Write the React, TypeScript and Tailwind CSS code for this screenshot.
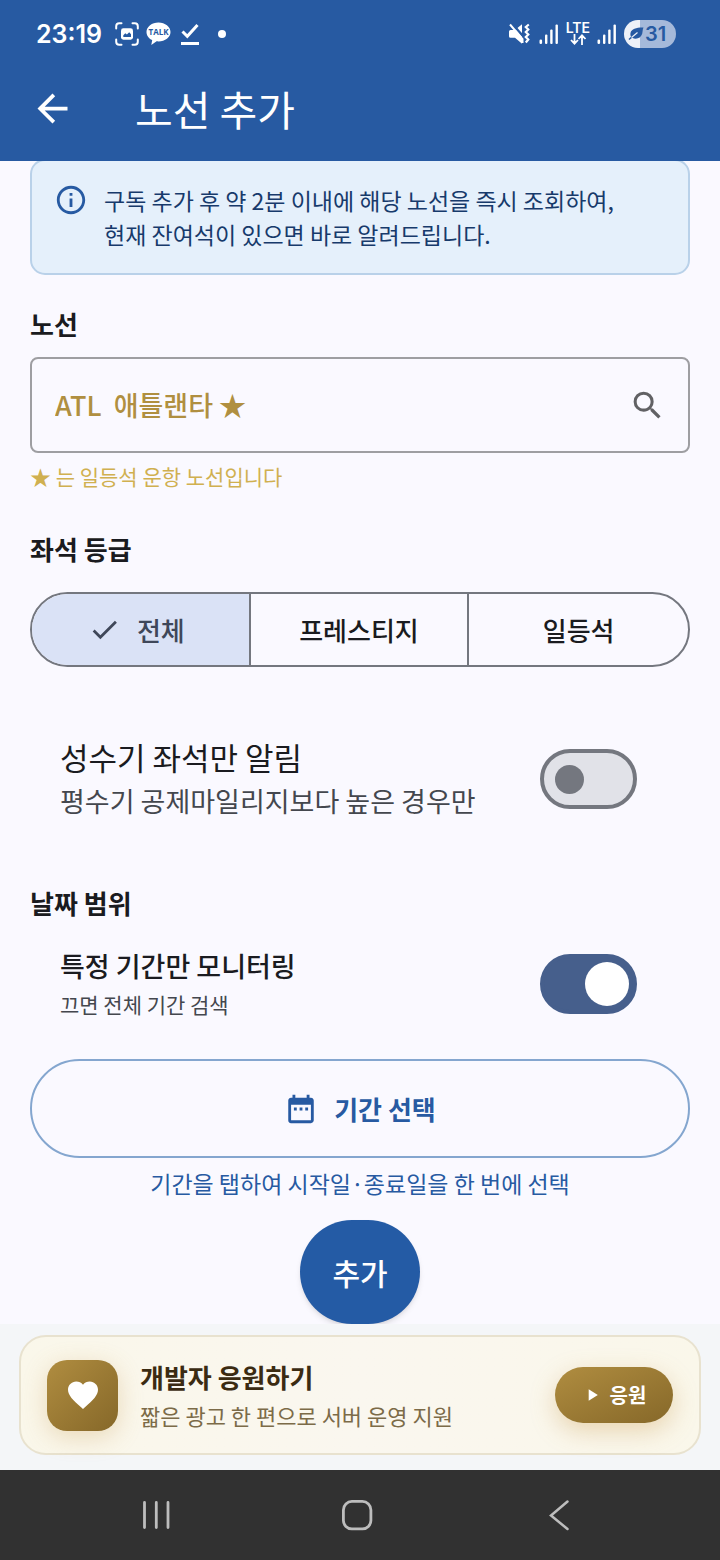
import { useState } from "react";
import {
  MdArrowBack,
  MdCheck,
  MdDateRange,
  MdFavorite,
  MdInfoOutline,
  MdPlayArrow,
  MdSearch,
} from "react-icons/md";

function SignalIcon() {
  return (
    <svg viewBox="0 0 20 20" className="h-5 w-5" fill="#fff" aria-hidden="true">
      <rect x="0.5" y="15.5" width="2.6" height="4.5" rx="1.2" />
      <rect x="6" y="10.5" width="2.4" height="9.5" rx="1" />
      <rect x="11.2" y="5.5" width="2.4" height="14.5" rx="1" />
      <rect x="16.5" y="0.5" width="2.4" height="19.5" rx="1" />
    </svg>
  );
}

function StatusBar() {
  return (
    <div className="flex h-[67px] items-center justify-between pr-11 pl-9">
      <div className="flex items-center">
        <span className="font-[Inter,sans-serif] text-[25px] leading-8 font-semibold">23:19</span>
        <svg viewBox="0 0 24 24" className="ml-[13px] h-6 w-6" fill="none" stroke="#fff" strokeWidth="2" strokeLinecap="round" aria-hidden="true">
          <path d="M1.2 6.5V4.2a3 3 0 0 1 3-3h2.3M17.5 1.2h2.3a3 3 0 0 1 3 3v2.3M22.8 17.5v2.3a3 3 0 0 1-3 3h-2.3M6.5 22.8H4.2a3 3 0 0 1-3-3v-2.3" />
          <rect x="6" y="6.3" width="12" height="11.4" rx="2.4" fill="#fff" stroke="none" />
          <path d="M8.3 15v-1.8l2-2 1.6 1.4 2.3-2.4 1.8 2V15z" fill="#275aa2" stroke="none" />
        </svg>
        <svg viewBox="0 0 26 24" className="ml-[7px] h-6 w-[26px]" aria-hidden="true">
          <path d="M12.5.5C5.9.5.5 4.7.5 10c0 3.500 2.300 6.500 5.700 8.100L5.300 23l5.300-3.700c.6.1 1.300.1 1.900.1 6.600 0 12-4.200 12-9.400S19.100.5 12.500.5z" fill="#fff" />
          <text x="12.500" y="13" textAnchor="middle" fontSize="8" fontWeight="700" fontFamily="'Open Sans', 'Liberation Sans', sans-serif" fill="#275aa2">TALK</text>
        </svg>
        <svg viewBox="0 0 20 24" className="ml-2 h-6 w-5" fill="none" stroke="#fff" strokeWidth="3" aria-hidden="true">
          <path d="M2.500 9.500l4.800 4.800L17.500 3" />
          <path d="M1 21.500h18" />
        </svg>
        <span className="ml-[18px] h-2 w-2 rounded-full bg-white" />
      </div>
      <div className="flex items-center">
        <svg viewBox="0 0 22 22" className="mr-[9px] h-[22px] w-[22px]" aria-hidden="true">
          <path d="M2.500 7h4.500L14 1.200v19.600l-7-6H2.500a1.500 1.500 0 0 1-1.500-1.500V8.500A1.500 1.500 0 0 1 2.500 7z" fill="#fff" />
          <path d="M4.500 1L17 15.500" stroke="#275aa2" strokeWidth="2.500" />
          <path d="M2 1.500L14.500 16v4" fill="none" stroke="#fff" strokeWidth="2" />
          <path d="M20.800 1.500l-3 2.500 2.500 2.500-2.500 2.500 2.500 2.500-2.500 2.500 2.500 2.500-2.500 3" fill="none" stroke="#fff" strokeWidth="2.200" />
        </svg>
        <SignalIcon />
        <div className="mx-[7px] flex flex-col items-center">
          <span className="font-[Inter,sans-serif] text-sm leading-3 font-semibold">LTE</span>
          <svg viewBox="0 0 18 11" className="h-[11px] w-[18px]" fill="none" stroke="#fff" strokeWidth="1.800" aria-hidden="true">
            <path d="M5.500 0v9.500M2 6l3.500 3.700L9 6M13 11V1.200M9.500 5L13 1.300 16.500 5" />
          </svg>
        </div>
        <SignalIcon />
        <div className="ml-[7px] flex h-7 w-[52px] items-center gap-px rounded-full bg-linear-to-r from-[#edf1f8] from-31% to-[#a5b9da] to-31% pl-1 text-[#275aa2]">
          <svg viewBox="0 0 16 14" className="h-3.5 w-4" aria-hidden="true">
            <path d="M15.500.5C9 .300 3.500 1.500 2.500 6c-.3 1.500 0 2.700.5 3.700L.5 12l.8 1 2.900-2.200c4 2 8.600.5 10-4 .5-2 .3-4.300 1.300-6.300z" fill="currentColor" />
            <path d="M3.500 10.500l6-5" stroke="#edf1f8" strokeWidth="1.200" />
          </svg>
          <span className="font-[Inter,sans-serif] text-xl leading-7 font-semibold">31</span>
        </div>
      </div>
    </div>
  );
}

function SectionTitle({ children }: { children: string }) {
  return <h2 className="text-[26px] leading-9 font-bold">{children}</h2>;
}

function Toggle({ id, checked, onChange }: { id: string; checked: boolean; onChange: (value: boolean) => void }) {
  return (
    <input
      id={id}
      type="checkbox"
      role="switch"
      checked={checked}
      onChange={(event) => onChange(event.target.checked)}
      className="flex h-[60px] w-[97px] shrink-0 appearance-none items-center rounded-full border-4 border-[#74777f] bg-[#e1e2e8] px-[11px] before:h-[29px] before:w-[29px] before:rounded-full before:bg-[#74777f] checked:justify-end checked:border-[#465f8c] checked:bg-[#465f8c] checked:px-1 checked:before:h-11 checked:before:w-11 checked:before:bg-white"
    />
  );
}

const seatClasses = ["전체", "프레스티지", "일등석"];

export default function App() {
  const [route, setRoute] = useState("ATL  애틀랜타 ★");
  const [seat, setSeat] = useState("전체");
  const [peakOnly, setPeakOnly] = useState(false);
  const [rangeOnly, setRangeOnly] = useState(true);

  return (
    <div className="flex min-h-screen flex-col bg-[#faf9ff] font-['Noto_Sans_CJK_KR',sans-serif] text-[#1a1b20]">
      <header className="bg-[#275aa2] text-white">
        <StatusBar />
        <div className="flex h-[94px] items-center pb-3 pl-[30px]">
          <button type="button" aria-label="뒤로">
            <MdArrowBack className="h-[45px] w-[45px]" />
          </button>
          <h1 className="ml-[60px] text-[41px] leading-[60px] font-normal">노선 추가</h1>
        </div>
      </header>

      <main className="flex flex-1 flex-col overflow-hidden px-[30px]">
        <div className="-mt-0.5 flex gap-4 rounded-[15px] border-2 border-[#b9d1e9] bg-[#e5f0fb] px-[22px] py-[22px]">
          <MdInfoOutline className="h-[34px] w-[34px] shrink-0 text-[#275aa2]" />
          <p className="text-[23px] leading-[34px] text-[#173a6b]">
            구독 추가 후 약 2분 이내에 해당 노선을 즉시 조회하여,
            <br />
            현재 잔여석이 있으면 바로 알려드립니다.
          </p>
        </div>

        <section className="mt-[31px]">
          <SectionTitle>노선</SectionTitle>
          <div className="mt-[15px] flex h-24 items-center rounded-lg border-2 border-[#9e9ea2] pr-[22px] pl-[23px]">
            <input
              aria-label="노선"
              value={route}
              onChange={(event) => setRoute(event.target.value)}
              className="min-w-0 flex-1 bg-transparent text-[27px] leading-10 font-medium text-[#b08f40] outline-none"
            />
            <MdSearch className="h-[37px] w-[37px] text-[#616164]" />
          </div>
          <p className="mt-[9px] text-[21px] leading-7 text-[#d0b050]">★ 는 일등석 운항 노선입니다</p>
        </section>

        <section className="mt-[41px]">
          <SectionTitle>좌석 등급</SectionTitle>
          <div className="mt-[25px] grid h-[75px] grid-cols-3 divide-x-2 divide-[#74777f] overflow-hidden rounded-full border-2 border-[#74777f]">
            {seatClasses.map((name) => (
              <label
                key={name}
                className="flex items-center justify-center text-[26px] leading-9 font-medium has-checked:bg-[#dae2f6] has-checked:pr-2 has-checked:text-[#3f4759]"
              >
                <input
                  type="radio"
                  name="seat"
                  value={name}
                  checked={seat === name}
                  onChange={() => setSeat(name)}
                  className="sr-only"
                />
                {seat === name && <MdCheck className="mr-4 h-[33px] w-[33px]" />}
                {name}
              </label>
            ))}
          </div>
        </section>

        <div className="mt-[68px] flex items-center justify-between pr-[53px] pl-[30px]">
          <label htmlFor="peak">
            <span className="block text-[31px] leading-[44px]">성수기 좌석만 알림</span>
            <span className="block text-[27px] leading-[44px] text-[#44474e]">평수기 공제마일리지보다 높은 경우만</span>
          </label>
          <Toggle id="peak" checked={peakOnly} onChange={setPeakOnly} />
        </div>

        <section className="mt-[62px]">
          <SectionTitle>날짜 범위</SectionTitle>
          <div className="mt-[25px] flex items-center justify-between pr-[53px] pl-[30px]">
            <label htmlFor="range">
              <span className="block text-[27px] leading-10 font-medium">특정 기간만 모니터링</span>
              <span className="block text-[21px] leading-9 text-[#44474e]">끄면 전체 기간 검색</span>
            </label>
            <Toggle id="range" checked={rangeOnly} onChange={setRangeOnly} />
          </div>
          <button
            type="button"
            className="mt-[37px] flex h-[99px] w-full items-center justify-center gap-4 rounded-full border-2 border-[#84a6cf] text-[26px] leading-9 font-bold text-[#275aa2]"
          >
            <MdDateRange className="h-[34px] w-[34px]" />
            기간 선택
          </button>
          <p className="mt-2 text-center text-[23px] leading-[34px] text-[#275aa2]">
            기간을 탭하여 시작일·종료일을 한 번에 선택
          </p>
        </section>

        <button
          type="button"
          className="mt-5 h-[104px] w-[120px] self-center rounded-[52px] bg-[#245ba5] text-[30px] font-medium text-white shadow-md"
        >
          추가
        </button>
      </main>

      <footer>
        <div className="bg-[#f4f6f8] px-[19px] pt-[11px] pb-[15px]">
          <div className="flex h-[120px] items-center rounded-[27px] border-2 border-[#e8e2cf] bg-linear-to-r from-[#faf7ea] via-[#faf7ef] to-[#faf7ea] px-[26px]">
            <span className="flex h-[71px] w-[71px] items-center justify-center rounded-[20px] bg-linear-to-br from-[#b08d40] to-[#866829] text-white shadow-[0_6px_24px_rgba(200,150,70,0.3)]">
              <MdFavorite className="h-9 w-9" />
            </span>
            <div className="ml-[22px] flex-1">
              <p className="text-[26px] leading-10 font-bold text-[#3b2b12]">개발자 응원하기</p>
              <p className="text-[22px] leading-9 text-[#7c6b48]">짧은 광고 한 편으로 서버 운영 지원</p>
            </div>
            <button
              type="button"
              className="flex h-14 w-[118px] items-center justify-center gap-2 rounded-full bg-linear-to-br from-[#b08d40] to-[#866829] text-xl font-bold text-white shadow-[0_8px_24px_rgba(200,150,70,0.35)]"
            >
              <MdPlayArrow className="h-5 w-5" />
              응원
            </button>
          </div>
        </div>
        <nav className="flex h-[90px] items-center justify-between bg-[#313131] pr-[146px] pl-[140px]">
          <button type="button" aria-label="최근 앱">
            <svg viewBox="0 0 32 32" className="h-8 w-8" stroke="#bdbdbd" strokeWidth="2.800" strokeLinecap="round">
              <path d="M4.500 3.500v25M16.300 3.500v25M28 3.500v25" />
            </svg>
          </button>
          <button type="button" aria-label="홈">
            <svg viewBox="0 0 32 32" className="h-8 w-8" fill="none" stroke="#bdbdbd" strokeWidth="2.800">
              <rect x="2.400" y="2.400" width="27.500" height="27.500" rx="8.500" />
            </svg>
          </button>
          <button type="button" aria-label="뒤로 가기">
            <svg viewBox="0 0 32 32" className="h-8 w-8" fill="none" stroke="#bdbdbd" strokeWidth="2.500" strokeLinecap="round">
              <path d="M25.500 2.500L9 16.500 25.500 30" />
            </svg>
          </button>
        </nav>
      </footer>
    </div>
  );
}
